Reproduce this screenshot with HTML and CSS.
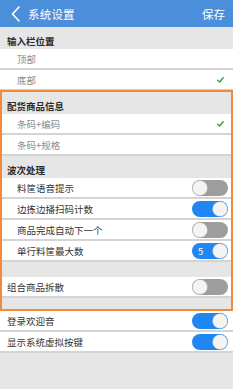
FILE: index.html
```html
<!DOCTYPE html>
<html lang="zh">
<head>
<meta charset="utf-8">
<link rel="stylesheet" href="styles.css">
</head>
<body>
<div class="app">
  <header class="topbar">
    <svg class="back" width="9" height="16" viewBox="0 0 9 16"><polyline points="8,1 1.5,8 8,15" fill="none" stroke="#fff" stroke-width="1.6" stroke-linecap="round" stroke-linejoin="round"/></svg>
    <span class="title">系统设置</span>
    <span class="save">保存</span>
  </header>

  <div class="sec">输入栏位置</div>
  <div class="row opt"><span>顶部</span></div>
  <div class="row opt"><span>底部</span><svg class="check" width="7" height="6" viewBox="0 0 7 6"><polyline points="0.8,3.2 2.7,5 6.2,0.8" fill="none" stroke="#3aa63f" stroke-width="1.5" stroke-linecap="round" stroke-linejoin="round"/></svg></div>

  <div class="hl">
    <div class="sec">配货商品信息</div>
    <div class="row opt"><span>条码+编码</span><svg class="check" width="7" height="6" viewBox="0 0 7 6"><polyline points="0.8,3.2 2.7,5 6.2,0.8" fill="none" stroke="#3aa63f" stroke-width="1.5" stroke-linecap="round" stroke-linejoin="round"/></svg></div>
    <div class="row opt"><span>条码+规格</span></div>

    <div class="sec">波次处理</div>
    <div class="row sub"><span>料筐语音提示</span><span class="tg"></span></div>
    <div class="row sub"><span>边拣边播扫码计数</span><span class="tg on"></span></div>
    <div class="row sub"><span>商品完成自动下一个</span><span class="tg"></span></div>
    <div class="row sub"><span>单行料筐最大数</span><span class="tg on"><span class="num">5</span></span></div>
    <div class="gap"></div>
    <div class="row top"><span>组合商品拆散</span><span class="tg"></span></div>
    <div class="gap2"></div>
  </div>

  <div class="row top"><span>登录欢迎音</span><span class="tg on"></span></div>
  <div class="row top"><span>显示系统虚拟按键</span><span class="tg on"></span></div>
</div>
</body>
</html>
```

FILE: styles.css
```css
* { box-sizing: border-box; }
html, body { margin: 0; padding: 0; }
body {
  background: #e6e6e6;
  font-family: "Noto Sans CJK SC", "Noto Sans", sans-serif;
  width: 233px;
  height: 389px;
  overflow: hidden;
}
.app { display: flex; flex-direction: column; }
.topbar {
  height: 27px;
  background: #4b8fdb;
  color: #fff;
  display: flex;
  align-items: center;
  padding: 0 8px 0 11px;
}
.back { display: block; }
.title { font-size: 11.5px; margin-left: 8px; letter-spacing: 0.2px; }
.save { font-size: 11.5px; margin-left: auto; }
.sec {
  height: 22px;
  display: flex;
  align-items: flex-end;
  padding: 0 7px 2px;
  font-size: 9.5px;
  line-height: 12px;
  font-weight: 700;
  color: #2a2a2a;
}
.row {
  height: 21px;
  background: #fff;
  border-bottom: 2px solid #d4d4d4;
  display: flex;
  align-items: center;
  font-size: 9.5px;
  line-height: 12px;
  padding-right: 5px;
}
.row.opt { color: #8c8c8c; padding-left: 17px; padding-right: 9px; }
.row.sub { color: #333; padding-left: 17px; }
.row.top { color: #333; padding-left: 7px; }
.check { margin-left: auto; display: block; }
.hl {
  position: relative;
  padding: 1px 0 2px;
}
.hl::after {
  content: "";
  position: absolute;
  left: 0; right: 0; top: -1px; bottom: 0;
  border: 2px solid #f08a3c;
  pointer-events: none;
}
.gap { height: 15px; }
.gap2 { height: 11px; }
.tg {
  margin-left: auto;
  width: 36px;
  height: 16px;
  border-radius: 8px;
  background: #9d9d9d;
  position: relative;
  display: flex;
  align-items: center;
}
.tg::after {
  content: "";
  position: absolute;
  top: 1px;
  left: 1px;
  width: 14px;
  height: 14px;
  border-radius: 50%;
  background: #f4f4f4;
  box-shadow: 0 0 0 0.6px #cfcfcf;
}
.tg.on { background: #1f86f2; }
.tg.on::after { left: 21px; }
.num { color: #fff; font-size: 9.5px; margin-left: 6px; line-height: 12px; }
```
